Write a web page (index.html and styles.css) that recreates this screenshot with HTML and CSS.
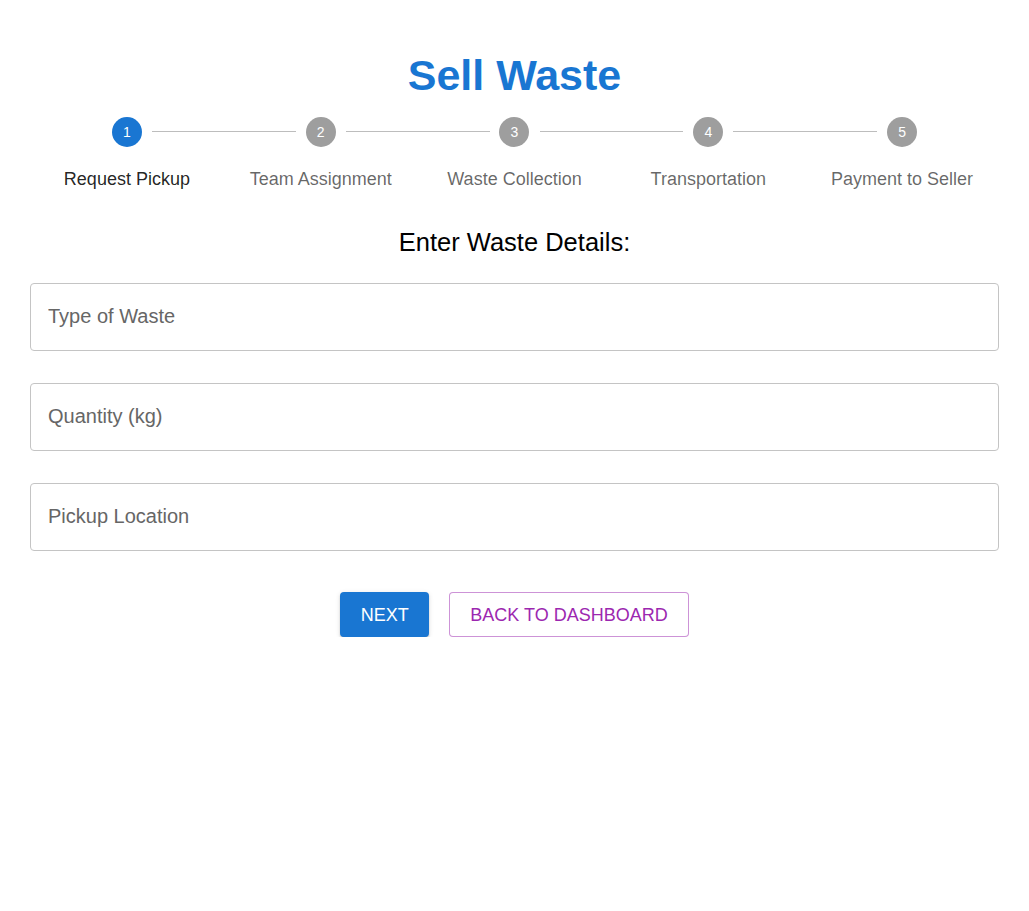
FILE: index.html
```html
<!DOCTYPE html>
<html lang="en">
<head>
<meta charset="utf-8">
<title>Sell Waste</title>
<link rel="stylesheet" href="styles.css">
</head>
<body>
<main class="page">
  <h1 class="title">Sell Waste</h1>
  <ol class="stepper">
    <li class="step active">
      <span class="circle">1</span>
      <span class="label">Request Pickup</span>
    </li>
    <li class="step">
      <span class="connector"></span>
      <span class="circle">2</span>
      <span class="label">Team Assignment</span>
    </li>
    <li class="step">
      <span class="connector"></span>
      <span class="circle">3</span>
      <span class="label">Waste Collection</span>
    </li>
    <li class="step">
      <span class="connector"></span>
      <span class="circle">4</span>
      <span class="label">Transportation</span>
    </li>
    <li class="step">
      <span class="connector"></span>
      <span class="circle">5</span>
      <span class="label">Payment to Seller</span>
    </li>
  </ol>
  <h2 class="heading">Enter Waste Details:</h2>
  <form class="form">
    <input class="field" type="text" placeholder="Type of Waste">
    <input class="field" type="text" placeholder="Quantity (kg)">
    <input class="field" type="text" placeholder="Pickup Location">
    <div class="actions">
      <button type="button" class="btn btn-primary">NEXT</button>
      <button type="button" class="btn btn-outline">BACK TO DASHBOARD</button>
    </div>
  </form>
</main>
</body>
</html>
```

FILE: styles.css
```css
* { box-sizing: border-box; }
html, body { margin: 0; padding: 0; background: #fff; }
body { font-family: "Liberation Sans", Arial, sans-serif; }

.page {
  padding: 51px 30px 0;
}

.title {
  margin: 0;
  text-align: center;
  font-size: 43px;
  line-height: 48px;
  font-weight: 700;
  color: #1976d2;
}

.stepper {
  list-style: none;
  margin: 18px 0 0;
  padding: 0;
  display: grid;
  grid-template-columns: repeat(5, 1fr);
}

.step {
  position: relative;
  display: flex;
  flex-direction: column;
  align-items: center;
}

.connector {
  position: absolute;
  top: 14px;
  left: calc(-50% + 25px);
  right: calc(50% + 25px);
  border-top: 1px solid #bdbdbd;
}

.circle {
  width: 30px;
  height: 30px;
  border-radius: 50%;
  background: #9e9e9e;
  color: #fff;
  font-size: 14px;
  display: flex;
  align-items: center;
  justify-content: center;
}

.step.active .circle { background: #1976d2; }

.label {
  margin-top: 19px;
  font-size: 18px;
  line-height: 26px;
  color: rgba(0, 0, 0, 0.6);
}

.step.active .label { color: rgba(0, 0, 0, 0.87); }

.heading {
  margin: 35px 0 0;
  text-align: center;
  font-size: 25.5px;
  line-height: 31px;
  font-weight: 400;
  color: #000;
}

.form {
  margin-top: 25px;
  display: flex;
  flex-direction: column;
  gap: 32px;
}

.field {
  display: block;
  width: 100%;
  height: 68px;
  padding: 0 17px 2px;
  border: 1px solid #c4c4c4;
  border-radius: 4px;
  font-family: inherit;
  font-size: 20px;
  color: rgba(0, 0, 0, 0.87);
  background: #fff;
  outline: none;
}

.field::placeholder { color: #666; opacity: 1; }

.actions {
  margin-top: 9px;
  display: flex;
  justify-content: center;
  gap: 20px;
}

.btn {
  height: 45px;
  border-radius: 4px;
  font-family: inherit;
  font-size: 18px;
  line-height: 1;
  cursor: pointer;
}

.btn-primary {
  padding: 0 20.5px;
  background: #1976d2;
  color: #fff;
  border: none;
  box-shadow: 0 3px 1px -2px rgba(0,0,0,0.2), 0 2px 2px 0 rgba(0,0,0,0.14), 0 1px 5px 0 rgba(0,0,0,0.12);
}

.btn-outline {
  padding: 0 20px;
  background: #fff;
  color: #9c27b0;
  border: 1px solid rgba(156, 39, 176, 0.5);
}
```
